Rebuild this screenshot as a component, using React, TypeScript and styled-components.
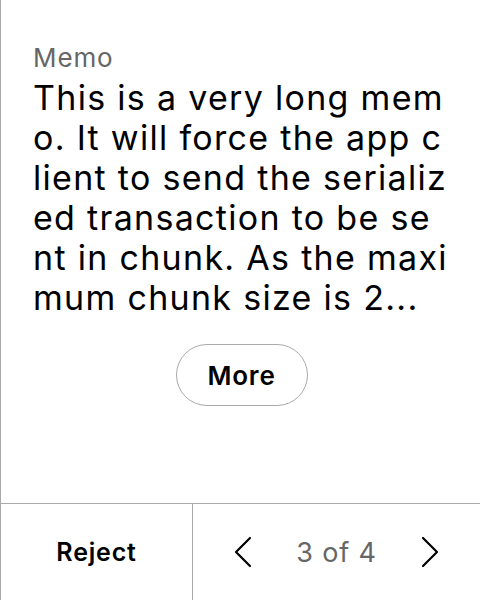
import React from "react";
import styled, { createGlobalStyle } from "styled-components";

const Global = createGlobalStyle`
  html, body { margin: 0; padding: 0; background: #fff; }
  body { font-family: Inter, "Noto Sans", sans-serif; }
`;

const Screen = styled.div`
  width: 480px;
  height: 600px;
  box-sizing: border-box;
  border-left: 1px solid #aaaaaa;
  display: flex;
  flex-direction: column;
  color: #000;
`;

const Content = styled.div`
  flex: 1;
  display: flex;
  flex-direction: column;
  padding: 42px 30px 0 32px;
`;

const Label = styled.div`
  font-size: 26px;
  line-height: 32px;
  letter-spacing: 0.9px;
  color: #666666;
`;

const MemoText = styled.div`
  margin-top: 4px;
  font-size: 34px;
  line-height: 40px;
  letter-spacing: 1.3px;
`;

const MemoLine = styled.div`
  white-space: pre;
`;

const MoreButton = styled.button`
  align-self: center;
  margin-top: 26px;
  width: 132px;
  height: 62px;
  border-radius: 31px;
  border: 1.5px solid #aaaaaa;
  background: #fff;
  font-family: Inter, sans-serif;
  font-size: 26px;
  font-weight: 600;
  letter-spacing: 0.8px;
  color: #000;
  padding: 0;
`;

const Footer = styled.div`
  height: 96px;
  border-top: 1px solid #aaaaaa;
  display: flex;
`;

const RejectCell = styled.div`
  width: 191px;
  border-right: 1px solid #aaaaaa;
  display: flex;
  align-items: center;
  justify-content: center;
  font-size: 25px;
  font-weight: 600;
  letter-spacing: 0.8px;
`;

const Pager = styled.div`
  flex: 1;
  display: flex;
  align-items: center;
  justify-content: space-between;
  padding: 0 40px 0 40px;
`;

const PageText = styled.span`
  font-size: 27px;
  letter-spacing: 0.8px;
  color: #666666;
`;

const Chevron = ({ dir }: { dir: "left" | "right" }) => (
  <svg width="20" height="32" viewBox="0 0 20 32" fill="none">
    <path
      d={dir === "left" ? "M17 2 L3 16 L17 30" : "M3 2 L17 16 L3 30"}
      stroke="#000"
      strokeWidth="2.2"
      strokeLinecap="round"
      strokeLinejoin="round"
    />
  </svg>
);

const memoLines = [
  "This is a very long mem",
  "o. It will force the app c",
  "lient to send the serializ",
  "ed transaction to be se",
  "nt in chunk. As the maxi",
  "mum chunk size is 2...",
];

export default function App() {
  return (
    <>
      <Global />
      <Screen>
        <Content>
          <Label>Memo</Label>
          <MemoText>
            {memoLines.map((l, i) => (
              <MemoLine key={i}>{l}</MemoLine>
            ))}
          </MemoText>
          <MoreButton>More</MoreButton>
        </Content>
        <Footer>
          <RejectCell>Reject</RejectCell>
          <Pager>
            <Chevron dir="left" />
            <PageText>3 of 4</PageText>
            <Chevron dir="right" />
          </Pager>
        </Footer>
      </Screen>
    </>
  );
}
